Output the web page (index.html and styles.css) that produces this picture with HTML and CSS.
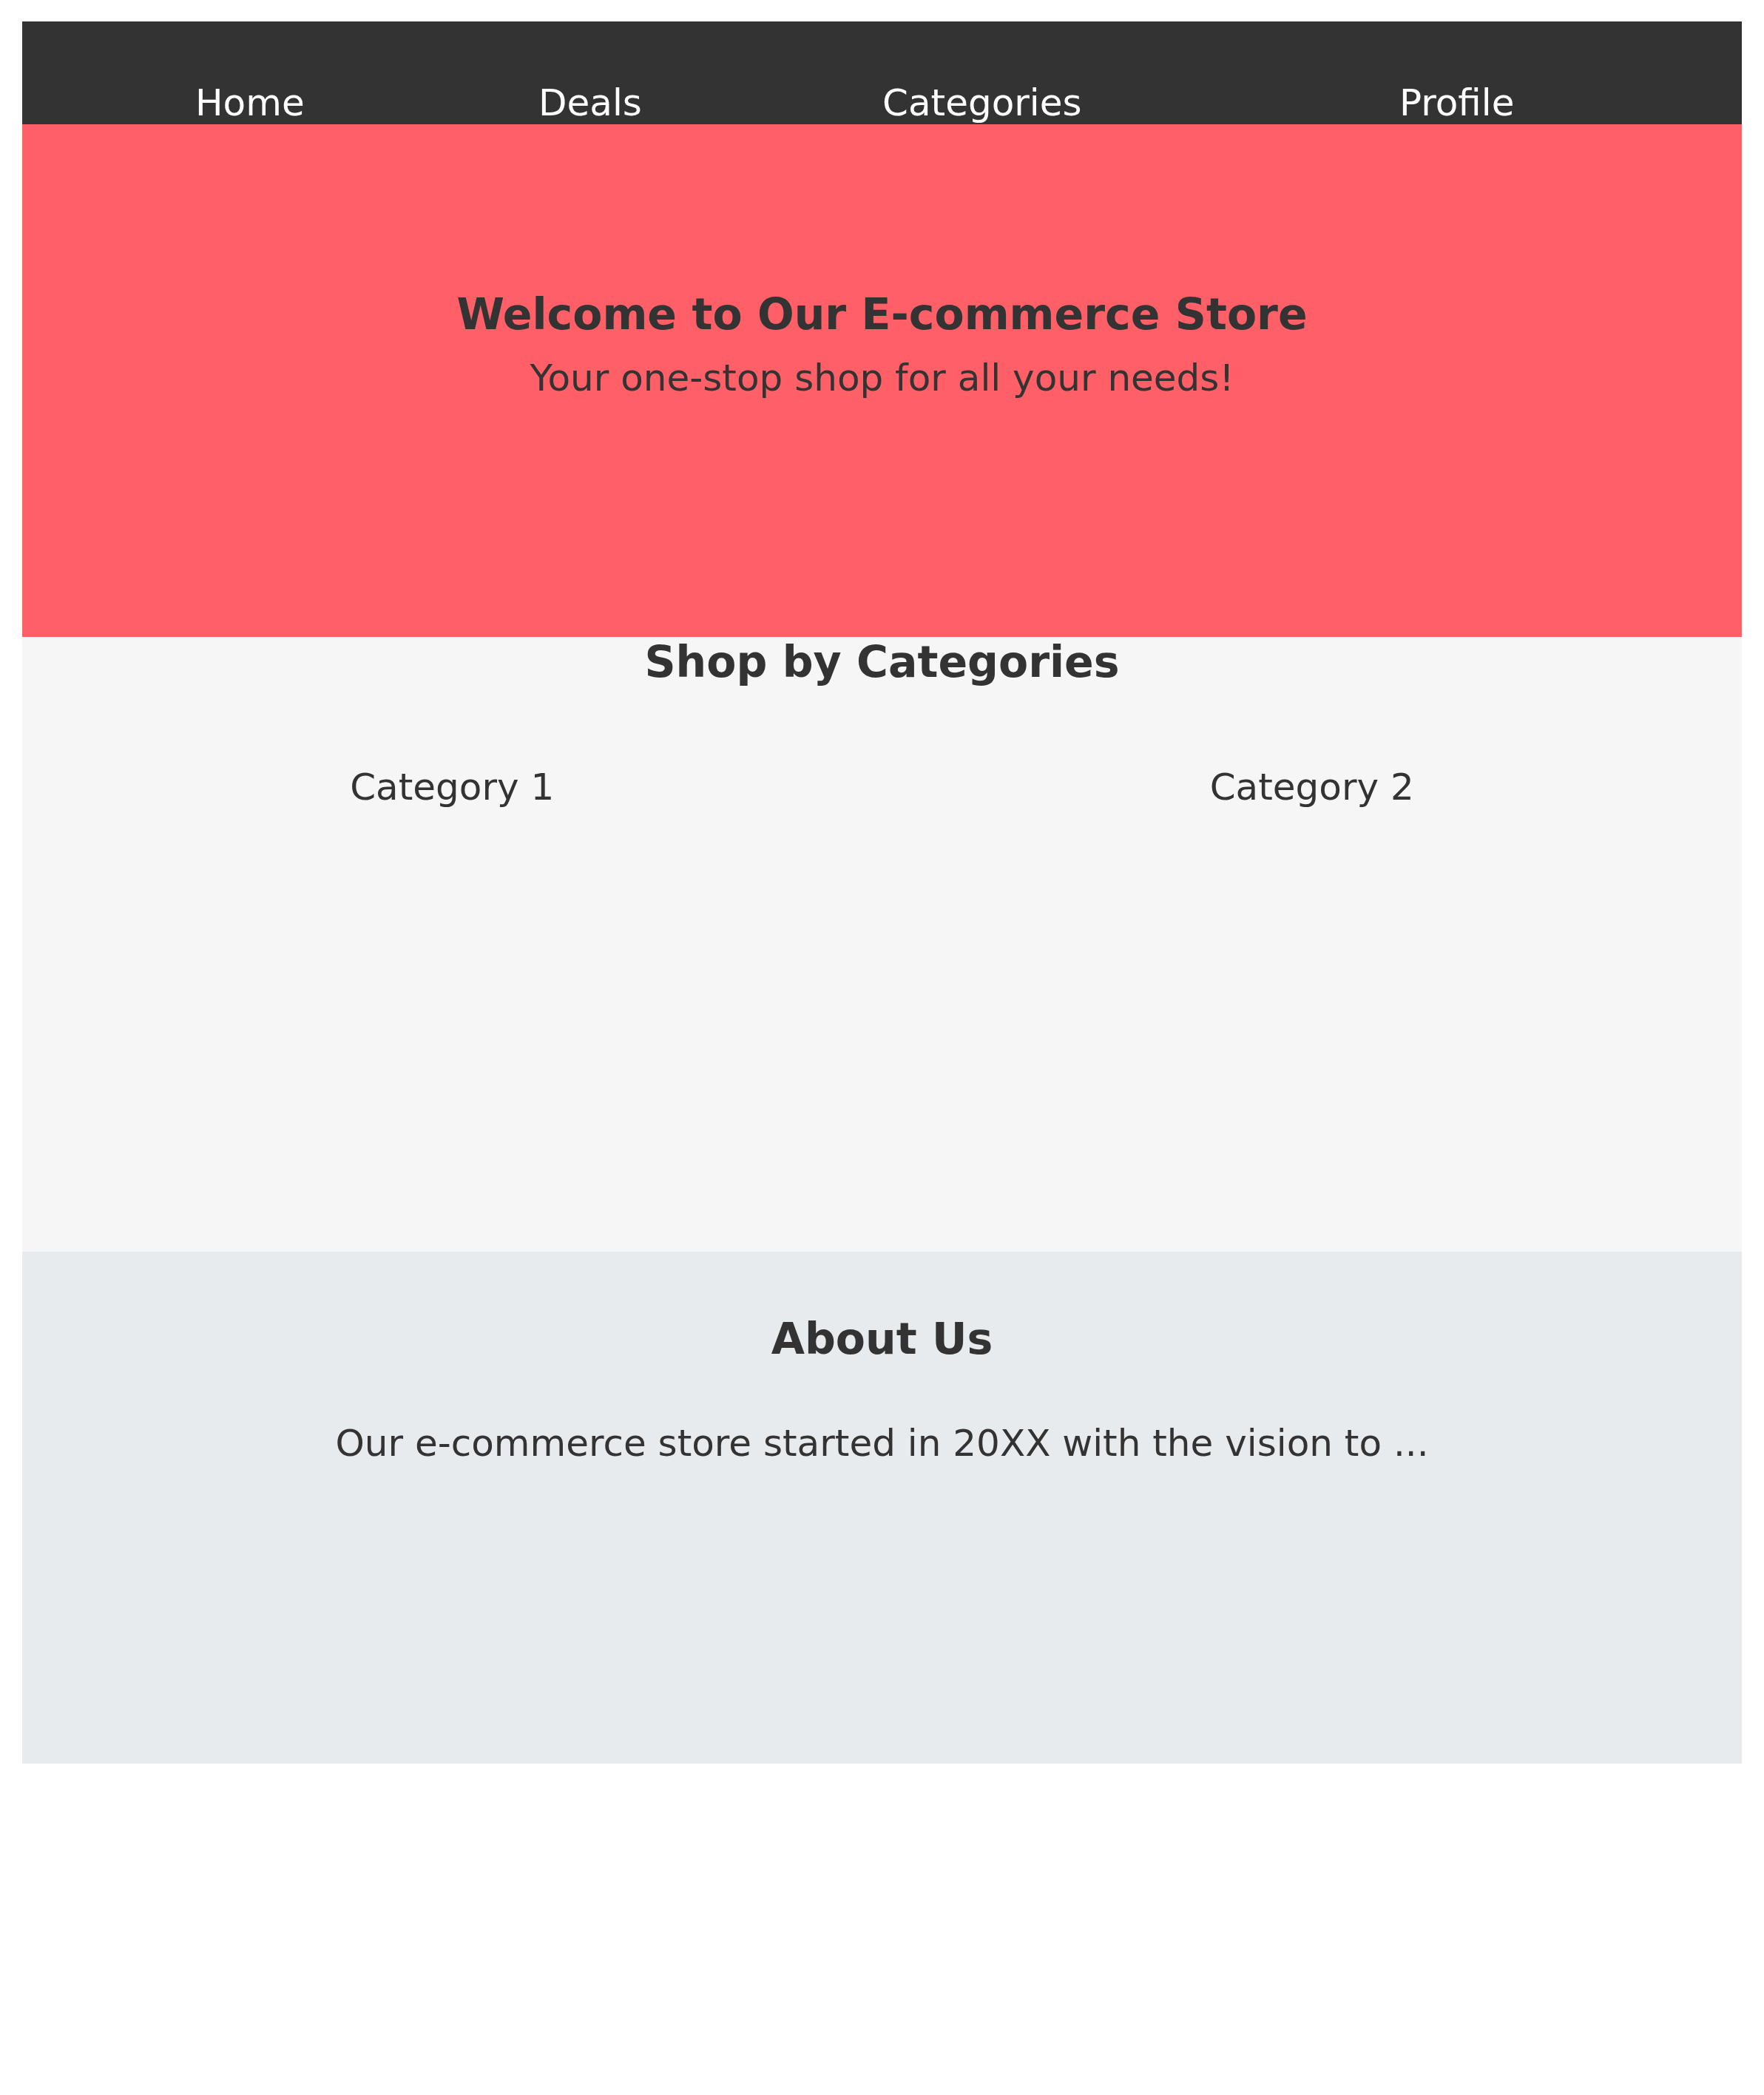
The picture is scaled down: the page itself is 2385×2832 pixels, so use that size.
FILE: index.html
```html
<!DOCTYPE html>
<html lang="en">
<head>
<meta charset="utf-8">
<title>E-commerce Store</title>
<link rel="stylesheet" href="styles.css">
</head>
<body>
<nav class="nav">
  <a class="nav-link" href="#">Home</a>
  <a class="nav-link" href="#">Deals</a>
  <a class="nav-link" href="#">Categories</a>
  <a class="nav-link" href="#">Profile</a>
</nav>
<section class="hero">
  <h1 class="hero-title">Welcome to Our E-commerce Store</h1>
  <p class="hero-sub">Your one-stop shop for all your needs!</p>
</section>
<section class="categories">
  <h2 class="section-title">Shop by Categories</h2>
  <div class="category-grid">
    <div class="category">Category 1</div>
    <div class="category">Category 2</div>
  </div>
</section>
<section class="about">
  <h2 class="section-title">About Us</h2>
  <p class="about-text">Our e-commerce store started in 20XX with the vision to ...</p>
</section>
</body>
</html>
```
FILE: styles.css
```css
html, body {
  background: #ffffff;
}
body {
  margin: 0;
  padding: 29px 30px 0 30px;
  font-family: "DejaVu Sans", "Liberation Sans", sans-serif;
  color: #333333;
}
.nav {
  background: #333333;
  height: 139px;
  box-sizing: border-box;
  padding-left: 234px;
  display: grid;
  grid-template-columns: 464px 465px 699px auto;
  align-items: end;
}
.nav-link {
  color: #ffffff;
  text-decoration: none;
  font-size: 50px;
  line-height: normal;
}
.hero {
  background: #ff5f67;
  height: 693px;
  box-sizing: border-box;
  padding-top: 223px;
  text-align: center;
}
.hero-title {
  margin: 0;
  font-size: 58.5px;
  font-weight: bold;
  line-height: normal;
}
.hero-sub {
  margin: 23px 0 0 0;
  font-size: 50px;
  line-height: normal;
}
.categories {
  background: #f6f6f6;
  height: 831px;
  box-sizing: border-box;
  text-align: center;
}
.section-title {
  margin: 0;
  font-size: 58.5px;
  font-weight: bold;
  line-height: normal;
}
.category-grid {
  display: grid;
  grid-template-columns: 1fr 1fr;
  margin-top: 106px;
}
.category {
  font-size: 50px;
  line-height: normal;
}
.about {
  background: #e8ebee;
  height: 692px;
  box-sizing: border-box;
  padding-top: 84px;
  text-align: center;
}
.about-text {
  margin: 78px 0 0 0;
  font-size: 50px;
  line-height: normal;
}
```
